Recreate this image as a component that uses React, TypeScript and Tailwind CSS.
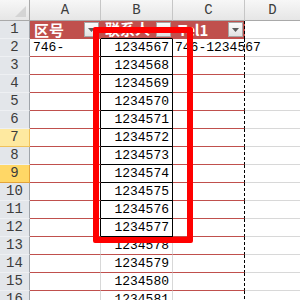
import React from 'react';

const ROW_COUNT = 16;
const FIRST_PHONE = 1234567;

// row headers that show as highlighted
const rowTint: Record<number, string> = {
  7: 'bg-[#fee9a0] border-[#f0c15a]',
  9: 'bg-[#ffd766] border-[#e3a33a]',
};

const headerFont = { fontFamily: '"Noto Sans CJK SC", sans-serif' };

const FilterButton: React.FC = () => (
  <div className="absolute right-[1px] top-[1px] flex h-[15px] w-[15px] items-center justify-center border border-[#a6a6a6] bg-gradient-to-b from-[#fbfbfb] to-[#e2e2e2]">
    <svg width="7" height="4" viewBox="0 0 7 4">
      <path d="M0 0h7L3.5 4z" fill="#5a5a5a" />
    </svg>
  </div>
);

const ColumnHeader: React.FC<{ label: string; last?: boolean }> = ({ label, last }) => (
  <div
    className={`flex items-center justify-center border-b border-[#a9a9a9] bg-gradient-to-b from-[#f7f7f7] to-[#e6e6e6] text-[14px] text-[#3c3c3c] ${
      last ? '' : 'border-r border-r-[#c6c6c6]'
    }`}
  >
    {label}
  </div>
);

const RowHeader: React.FC<{ n: number }> = ({ n }) => (
  <div
    className={`flex items-center justify-center border-r border-b text-[14px] text-[#3c3c3c] ${
      rowTint[n] ?? 'bg-[#e3e6ea] border-b-[#eef0f3] border-r-[#9fa4aa]'
    }`}
  >
    {n}
  </div>
);

export default function App() {
  const rows = Array.from({ length: ROW_COUNT }, (_, i) => i + 1);

  return (
    <div
      className="relative h-[300px] w-[300px] overflow-hidden bg-white"
      style={{ fontFamily: '"Liberation Mono", "Noto Sans CJK SC", monospace' }}
    >
      <div className="grid grid-cols-[30px_71px_72px_72px_1fr] grid-rows-[21px_repeat(16,18px)]">
        {/* corner */}
        <div className="relative border-r border-b border-[#a9a9a9] bg-gradient-to-b from-[#f7f7f7] to-[#e6e6e6]">
          <svg className="absolute bottom-[3px] right-[3px]" width="11" height="11" viewBox="0 0 11 11">
            <path d="M11 0v11H0z" fill="#d4d4d4" />
          </svg>
        </div>
        <ColumnHeader label="A" />
        <ColumnHeader label="B" />
        <ColumnHeader label="C" />
        <ColumnHeader label="D" last />

        {rows.map((n) => {
          if (n === 1) {
            return (
              <React.Fragment key={n}>
                <RowHeader n={n} />
                <div className="relative flex items-center border-r border-r-[#c0504d] bg-[#c0504d] pl-[4px] text-[15px] font-bold text-white" style={headerFont}>
                  区号
                  <FilterButton />
                </div>
                <div className="relative flex items-center border-r border-b border-r-[#c0504d] border-b-black bg-[#c0504d] pl-[4px] text-[15px] font-bold text-white" style={headerFont}>
                  联系人
                  <FilterButton />
                </div>
                <div className="relative flex items-center border-r border-r-black bg-[#c0504d] pl-[5px] text-[15px] font-bold text-white [border-right-style:dashed]" style={headerFont}>
                  Tel1
                  <FilterButton />
                </div>
                <div className="border-b border-[#d8d8d8]" />
              </React.Fragment>
            );
          }

          const boxed = n <= 12;
          return (
            <React.Fragment key={n}>
              <RowHeader n={n} />
              <div
                className={`flex items-center border-b border-b-[#c0504d] border-r pl-[3px] text-[13px] ${
                  boxed ? 'border-r-black' : 'border-r-[#d8d8d8]'
                }`}
              >
                {n === 2 ? '746-' : ''}
              </div>
              <div
                className={`flex items-center justify-end border-r border-b pr-[3px] text-[13px] ${
                  boxed ? 'border-black' : 'border-r-[#d8d8d8] border-b-[#c0504d]'
                }`}
              >
                {FIRST_PHONE + n - 2}
              </div>
              <div className="relative flex items-center border-r border-b border-r-black border-b-[#c0504d] text-[13px] [border-right-style:dashed]">
                {n === 2 && (
                  <span className="absolute left-[2px] whitespace-nowrap">746-1234567</span>
                )}
              </div>
              <div className="border-b border-[#d8d8d8]" />
            </React.Fragment>
          );
        })}
      </div>

      {/* highlight frame drawn over the phone column */}
      <div className="pointer-events-none absolute left-[93px] top-[27px] h-[216px] w-[100px] rounded-[2px] border-[6px] border-[#ff0000]" />
    </div>
  );
}
